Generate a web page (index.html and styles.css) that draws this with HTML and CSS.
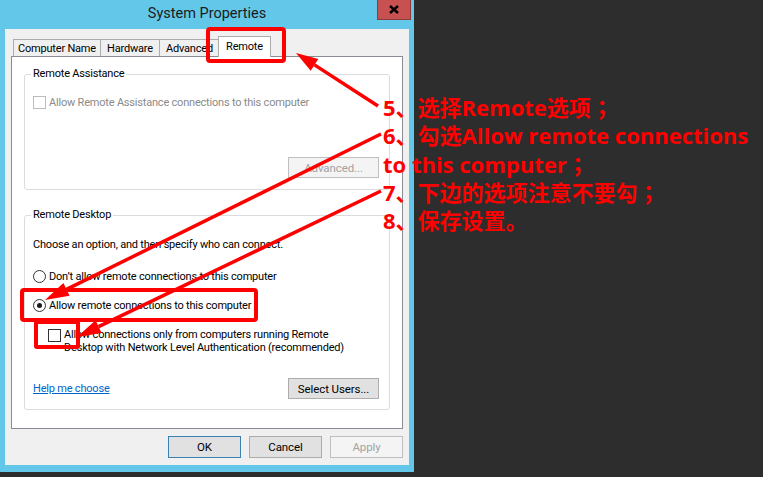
FILE: index.html
```html
<!DOCTYPE html>
<html>
<head>
<meta charset="utf-8">
<link rel="stylesheet" href="styles.css">
</head>
<body>
<div class="desktop">
  <div class="window">
    <div class="titlebar">
      <span></span>
      <span class="title">System Properties</span>
      <button class="close"><svg width="10" height="9" viewBox="0 0 10 9"><path d="M1 1 L9 8 M9 1 L1 8" stroke="#000" stroke-width="2.4" fill="none"/></svg></button>
    </div>
    <div class="client">
      <div class="tabs">
        <div class="tab t-cn">Computer Name</div>
        <div class="tab t-hw">Hardware</div>
        <div class="tab t-adv">Advanced</div>
        <div class="tab t-rem active">Remote</div>
      </div>
      <div class="panel">
        <fieldset class="group ra">
          <legend>Remote Assistance</legend>
          <label class="check disabled"><span class="box"></span>Allow Remote Assistance connections to this computer</label>
          <div class="btnrow"><button class="btn wide disabled">Advanced...</button></div>
        </fieldset>
        <fieldset class="group rd">
          <legend>Remote Desktop</legend>
          <p class="hint">Choose an option, and then specify who can connect.</p>
          <label class="radio r1"><span class="dot"></span>Don’t allow remote connections to this computer</label>
          <label class="radio r2 on"><span class="dot"></span>Allow remote connections to this computer</label>
          <label class="check nla"><span class="box"></span><span class="two">Allow connections only from computers running Remote<br>Desktop with Network Level Authentication (recommended)</span></label>
          <div class="helprow">
            <a class="help" href="#">Help me choose</a>
            <button class="btn wide">Select Users...</button>
          </div>
        </fieldset>
      </div>
      <div class="buttons">
        <button class="btn ok">OK</button>
        <button class="btn">Cancel</button>
        <button class="btn disabled">Apply</button>
      </div>
    </div>
  </div>

  <div class="notes">
    <div class="line">5、选择Remote选项<span class="semi">；</span></div>
    <div class="line">6、勾选Allow remote connections</div>
    <div class="line">to this computer<span class="semi">；</span></div>
    <div class="line">7、下边的选项注意不要勾<span class="semi">；</span></div>
    <div class="line">8、保存设置。</div>
  </div>

  <svg class="marks" width="763" height="477" viewBox="0 0 763 477">
    <g fill="none" stroke="#ff0000" stroke-width="4">
      <rect x="208" y="29" width="76" height="32" rx="2"/>
      <rect x="22" y="290" width="234" height="30" rx="2"/>
      <rect x="36" y="322" width="42" height="25" rx="1"/>
      <line x1="378" y1="106" x2="314.5" y2="64.9" stroke-width="3.5"/>
      <line x1="381" y1="134" x2="66.5" y2="289.4" stroke-width="3.5"/>
      <line x1="381" y1="191" x2="98.6" y2="326.6" stroke-width="3.5"/>
    </g>
    <g fill="#ff0000">
      <polygon points="296,53 318.3,59 310.7,70.8"/>
      <polygon points="45,300 63.4,283.1 69.6,295.7"/>
      <polygon points="77,337 95.6,320.3 101.6,332.9"/>
    </g>
  </svg>
</div>
</body>
</html>
```

FILE: styles.css
```css
* { box-sizing: border-box; }
html, body { margin: 0; padding: 0; }
body {
  background: #2d2d2d;
  font-family: Roboto, "Liberation Sans", Arial, sans-serif;
  font-size: 11px;
  letter-spacing: -0.2px;
  color: #000;
}
.desktop {
  position: relative;
  width: 763px;
  height: 477px;
  overflow: hidden;
}
.window {
  width: 414px;
  height: 472px;
  background: #63c7e9;
  padding: 0 5px 7px 5px;
  display: flex;
  flex-direction: column;
}
.titlebar {
  height: 29px;
  display: grid;
  grid-template-columns: 1fr auto 1fr;
  align-items: start;
  margin: 0 -5px;
}
.title {
  font-size: 14.5px;
  letter-spacing: 0;
  line-height: 15px;
  margin-top: 6px;
  color: #1b1b1b;
}
.close {
  justify-self: end;
  margin-right: 3px;
  width: 34px;
  height: 20px;
  background: #c75050;
  border: 1px solid #8f3a3a;
  border-top: none;
  padding: 0;
  display: flex;
  align-items: center;
  justify-content: center;
}
.client {
  flex: 1;
  background: #f0f0f0;
  padding: 7px 6px 7px 6px;
  display: flex;
  flex-direction: column;
}
.tabs {
  height: 20px;
  display: flex;
  align-items: flex-end;
  padding-left: 2px;
}
.tab {
  height: 17px;
  border: 1px solid #acacac;
  border-bottom: none;
  background: #f0f0f0;
  display: flex;
  align-items: center;
  justify-content: center;
  padding-top: 1px;
  margin-right: -1px;
  color: #000;
  white-space: nowrap;
}
.t-cn { width: 88px; }
.t-hw { width: 60px; }
.t-adv { width: 61px; }
.t-rem { width: 53px; margin-left: -1px; }
.tab.active {
  height: 21px;
  margin-bottom: -1px;
  background: #fff;
  position: relative;
  z-index: 1;
  padding-top: 0;
  padding-bottom: 2px;
}
.panel {
  height: 373px;
  background: #fff;
  border: 1px solid #898c95;
  padding: 0 12px;
}
.group {
  margin: 0;
  border: 1px solid #dcdcdc;
  border-radius: 3px;
  padding: 0 10px 0 8px;
  min-width: 0;
}
.group legend {
  padding: 0 2px;
  margin-left: -2px;
  line-height: 14px;
  height: 14px;
}
.ra {
  margin-top: 10px;
  height: 123px;
}
.rd {
  margin-top: 18px;
  height: 202px;
}
.check, .radio {
  display: flex;
  align-items: flex-start;
  line-height: 14px;
  white-space: nowrap;
}
.box {
  width: 13px;
  height: 13px;
  border: 1px solid #333;
  background: #fff;
  margin-right: 3px;
  flex: none;
}
.check.disabled { color: #8a8a8a; }
.check.disabled .box { border-color: #bcbcbc; }
.ra .check { margin-top: 15px; }
.btnrow {
  display: flex;
  justify-content: flex-end;
  margin-top: 47px;
}
.btn {
  width: 73px;
  height: 22px;
  background: #e1e1e1;
  border: 1px solid #adadad;
  font-family: inherit;
  font-size: 11.5px;
  letter-spacing: -0.1px;
  color: #000;
  padding: 0;
}
.btn.wide { width: 91px; height: 21px; }
.btn.disabled {
  background: #f4f4f4;
  border-color: #bfbfbf;
  color: #a2a2a2;
}
.btn.ok { border-color: #3c7fb1; }
.hint {
  margin: 16px 0 0 0;
  line-height: 14px;
  white-space: nowrap;
}
.dot {
  width: 13px;
  height: 13px;
  border: 1px solid #333;
  border-radius: 50%;
  background: #fff;
  margin-right: 3px;
  flex: none;
  display: flex;
  align-items: center;
  justify-content: center;
}
.radio.on .dot::after {
  content: "";
  width: 5px;
  height: 5px;
  border-radius: 50%;
  background: #1a1a1a;
}
.r1 { margin-top: 18px; }
.r2 { margin-top: 15px; }
.nla {
  margin-top: 15px;
  margin-left: 15px;
  line-height: 13px;
}
.nla .box { margin-top: 1px; }
.helprow {
  margin-top: 24px;
  display: flex;
  justify-content: space-between;
  align-items: center;
}
.help {
  color: #0066cc;
  text-decoration: underline;
}
.buttons {
  margin-top: 7px;
  display: flex;
  justify-content: flex-end;
  gap: 8px;
}
.notes {
  position: absolute;
  left: 383px;
  top: 93px;
  color: #ff0000;
  font-family: "Open Sans", "Noto Sans CJK SC", sans-serif;
  font-weight: 700;
  font-size: 22px;
  letter-spacing: 0;
  white-space: nowrap;
}
.notes .line {
  height: 28.3px;
  line-height: 28px;
  overflow: visible;
}
.semi {
  font-family: "Noto Sans CJK JP", sans-serif;
  line-height: 1;
}
.marks {
  position: absolute;
  left: 0;
  top: 0;
  pointer-events: none;
}
```
